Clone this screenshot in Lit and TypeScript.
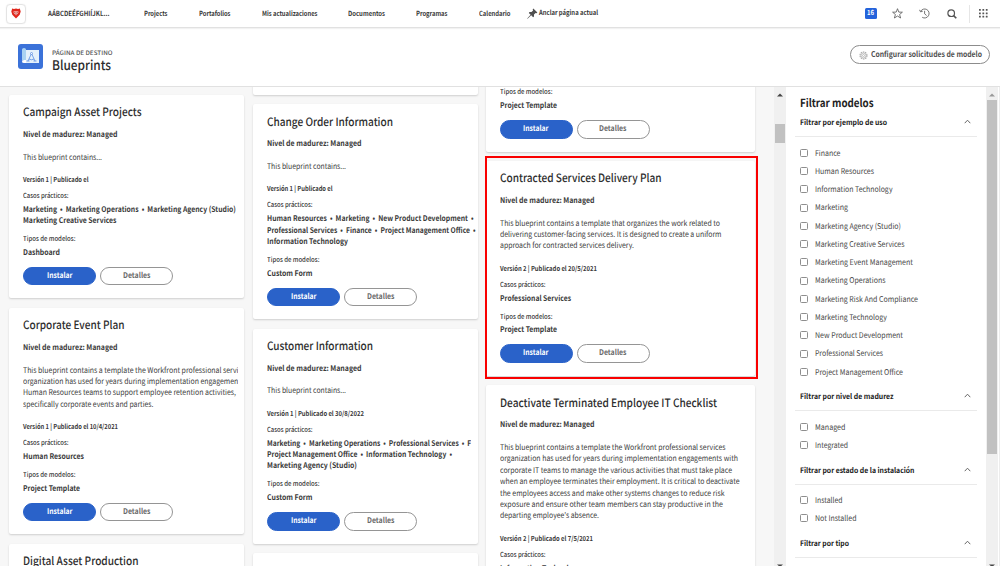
import { LitElement, html, css, svg } from "lit";
import { customElement, property } from "lit/decorators.js";

type Line = [text: string, width: number, clip?: number];

interface Blueprint {
  title?: Line;
  level?: Line;
  desc?: Line[];
  version?: Line;
  cases?: Line[];
  types?: Line;
}

const level: Line = ["Nivel de madurez: Managed", 94.5];
const short: Line[] = [["This blueprint contains...", 79]];
const columns: { name: string; cards: Blueprint[] }[] = [
  {
    name: "first",
    cards: [
      {
        title: ["Campaign Asset Projects", 118.5], level, desc: short,
        version: ["Versión 1 | Publicado el", 65.5],
        cases: [["Marketing  •  Marketing Operations  •  Marketing Agency (Studio)  •", 218.5, 215], ["Marketing Creative Services", 93.5]],
        types: ["Dashboard", 37],
      },
      {
        title: ["Corporate Event Plan", 101.5], level,
        desc: [
          ["This blueprint contains a template the Workfront professional services", 226, 215],
          ["organization has used for years during implementation engagements", 221, 215],
          ["Human Resources teams to support employee retention activities,", 213],
          ["specifically corporate events and parties.", 130.5],
        ],
        version: ["Versión 1 | Publicado el 10/4/2021", 95],
        cases: [["Human Resources", 61]],
        types: ["Project Template", 57],
      },
      { title: ["Digital Asset Production", 115.5], level, desc: short },
    ],
  },
  {
    name: "second",
    cards: [
      {},
      {
        title: ["Change Order Information", 126], level, desc: short,
        version: ["Versión 1 | Publicado el", 65.5],
        cases: [
          ["Human Resources  •  Marketing  •  New Product Development  •", 206.5],
          ["Professional Services  •  Finance  •  Project Management Office  •", 208.5],
          ["Information Technology", 81],
        ],
        types: ["Custom Form", 45.5],
      },
      {
        title: ["Customer Information", 106], level, desc: short,
        version: ["Versión 1 | Publicado el 30/8/2022", 97],
        cases: [
          ["Marketing  •  Marketing Operations  •  Professional Services  •  Finance", 226, 204],
          ["Project Management Office  •  Information Technology  •", 185],
          ["Marketing Agency (Studio)", 90],
        ],
        types: ["Custom Form", 45.5],
      },
      { title: ["Digital Asset Production", 115.5], level, desc: short },
    ],
  },
  {
    name: "third",
    cards: [
      { types: ["Project Template", 57] },
      {
        title: ["Contracted Services Delivery Plan", 161.5], level,
        desc: [
          ["This blueprint contains a template that organizes the work related to", 220],
          ["delivering customer-facing services. It is designed to create a uniform", 221.5],
          ["approach for contracted services delivery.", 134],
        ],
        version: ["Versión 2 | Publicado el 20/5/2021", 97],
        cases: [["Professional Services", 71]],
        types: ["Project Template", 57],
      },
      {
        title: ["Deactivate Terminated Employee IT Checklist", 217], level,
        desc: [
          ["This blueprint contains a template the Workfront professional services", 225.5],
          ["organization has used for years during implementation engagements with", 238],
          ["corporate IT teams to manage the various activities that must take place", 232],
          ["when an employee terminates their employment. It is critical to deactivate", 239.5],
          ["the employees access and make other systems changes to reduce risk", 224.5],
          ["exposure and ensure other team members can stay productive in the", 223],
          ["departing employee's absence.", 99],
        ],
        version: ["Versión 2 | Publicado el 7/5/2021", 93],
        cases: [["Information Technology", 81]],
        types: ["Project Template", 57],
      },
    ],
  },
];

const filters: { title: Line; items: Line[] }[] = [
  {
    title: ["Filtrar por ejemplo de uso", 87],
    items: [
      ["Finance", 25.5], ["Human Resources", 59], ["Information Technology", 77.5], ["Marketing", 33],
      ["Marketing Agency (Studio)", 86], ["Marketing Creative Services", 89.5], ["Marketing Event Management", 98],
      ["Marketing Operations", 70.5], ["Marketing Risk And Compliance", 103], ["Marketing Technology", 72],
      ["New Product Development", 88], ["Professional Services", 68], ["Project Management Office", 88],
    ],
  },
  { title: ["Filtrar por nivel de madurez", 93.5], items: [["Managed", 30.5], ["Integrated", 33]] },
  { title: ["Filtrar por estado de la instalación", 114.5], items: [["Installed", 27.5], ["Not Installed", 41.5]] },
  { title: ["Filtrar por tipo", 49], items: [] },
];

const nav: Line[] = [
  ["Projects", 23.5], ["Portafolios", 31.5], ["Mis actualizaciones", 55.5],
  ["Documentos", 37], ["Programas", 31.5], ["Calendario", 31.5],
];

/** One line of text, condensed or widened so that it fills the given width. */
@customElement("text-run")
export class TextRun extends LitElement {
  @property() text = "";
  @property({ type: Number }) width = 0;
  @property({ type: Number }) clip = 0;

  static styles = css`
    :host { display: block; white-space: pre; flex: none; }
    .box { overflow: visible; }
    .box.cut { overflow: hidden; }
    .run { display: inline-block; vertical-align: top; transform-origin: 0 50%; }
  `;

  render() {
    return html`<div class=${this.clip ? "box cut" : "box"} style="width:${this.clip || this.width}px"><span class="run">${this.text}</span></div>`;
  }

  updated() {
    const run = this.renderRoot.querySelector<HTMLElement>(".run")!;
    run.style.transform = "none";
    const natural = run.getBoundingClientRect().width;
    run.style.transform = `scaleX(${this.width / natural})`;
  }
}

const run = (line: Line, cls = "") =>
  html`<text-run class=${cls} .text=${line[0]} .width=${line[1]} .clip=${line[2] ?? 0}></text-run>`;

@customElement("blueprint-card")
export class BlueprintCard extends LitElement {
  @property({ attribute: false }) data: Blueprint = {};

  static styles = css`
    :host { display: block; flex: none; background: #fff; border-radius: 2px; box-shadow: 0 1px 2px rgba(0,0,0,.17); padding: 9.4px 0 13px 14px; color: #3a3a3a; }
    .title { font-size: 11.4px; line-height: 16px; font-weight: 500; margin-bottom: 8.4px; color: #2e2e2e; }
    .level { font-size: 7.8px; line-height: 12px; font-weight: 700; margin-bottom: 10.8px; }
    .desc { font-size: 7.9px; line-height: 11.4px; color: #404040; }
    .version { font-size: 6.9px; line-height: 12px; font-weight: 600; margin: 10px 0 4px; }
    .label { font-size: 6.9px; line-height: 12px; font-weight: 500; margin-bottom: 2.9px; }
    .value { font-size: 7.8px; line-height: 11.4px; font-weight: 700; }
    .cases { margin-bottom: 5.4px; }
    .buttons { display: flex; gap: 4px; margin-top: 8.5px; }
    .button { box-sizing: border-box; width: 73px; height: 18.6px; border-radius: 10px; display: flex; justify-content: center; font-size: 7.8px; line-height: 16.4px; font-weight: 700; }
    .install { background: #2a62c9; color: #fff; border: 1px solid #2a62c9; }
    .details { border: 1px solid #959595; color: #6a6a6a; }
  `;

  render() {
    const d = this.data;
    return html`
      ${d.title ? run(d.title, "title") : ""}
      ${d.level ? run(d.level, "level") : ""}
      ${d.desc ? d.desc.map((l) => run(l, "desc")) : ""}
      ${d.version ? run(d.version, "version") : ""}
      ${d.cases ? html`${run(["Casos prácticos:", 45.5], "label")}<div class="cases">${d.cases.map((l) => run(l, "value"))}</div>` : ""}
      ${d.types ? html`
        ${run(["Tipos de modelos:", 52.5], "label")}
        ${run(d.types, "value")}
        <div class="buttons">
          <div class="button install">${run(["Instalar", 25.5])}</div>
          <div class="button details">${run(["Detalles", 27.5])}</div>
        </div>` : ""}
    `;
  }
}

const dots = [0, 1, 2].flatMap((r) => [0, 1, 2].map((c) => svg`<rect x=${c * 3.4} y=${r * 3.4} width="1.8" height="1.8" rx=".3" />`));

@customElement("app-root")
export class AppRoot extends LitElement {
  static styles = css`
    :host { display: flex; flex-direction: column; width: 1000px; height: 566px; overflow: hidden; background: #fff; color: #3a3a3a; font-family: "Noto Sans CJK JP", "Open Sans", sans-serif; text-rendering: geometricPrecision; position: relative; }
    svg { display: block; flex: none; }
    .top { box-sizing: border-box; flex: none; height: 28px; border-bottom: 1px solid #e1e1e1; box-shadow: 0 1px 1px rgba(0,0,0,.05); display: flex; align-items: center; padding-left: 6px; font-size: 7px; line-height: 12px; font-weight: 600; }
    .logo { box-sizing: border-box; width: 20px; height: 20px; border: 1px solid #e4e4e4; border-radius: 4px; display: grid; place-items: center; margin-right: 21.5px; box-shadow: 0 0 1px rgba(0,0,0,.12); }
    .nav { display: flex; gap: 31.2px; margin-left: 35.2px; }
    .pin { margin: 0 1px 0 16px; }
    .pinned { margin-top: -1px; }
    .tools { margin-left: auto; display: flex; align-items: center; height: 27px; padding-right: 12px; }
    .badge { width: 11.5px; height: 11.5px; border-radius: 1.5px; background: #2463db; color: #fff; font-size: 7px; line-height: 10px; font-weight: 700; display: flex; justify-content: center; margin-right: 15px; }
    .star { margin-right: 16px; }
    .clock { margin-right: 17px; }
    .sep { width: 1px; height: 18px; background: #e6e6e6; margin: 0 9.5px 0 12px; }
    .head { box-sizing: border-box; flex: none; height: 58.5px; display: flex; align-items: center; padding: 0 10.5px 0 18px; border-bottom: 1px solid #e1e1e1; }
    .names { margin-left: 9px; padding-top: 6.5px; }
    .over { font-size: 6px; line-height: 9px; font-weight: 500; color: #555; }
    .name { font-size: 13.2px; line-height: 16px; font-weight: 500; color: #2c2c2c; }
    .config { box-sizing: border-box; margin-left: auto; margin-bottom: 4px; width: 140px; height: 19px; border: 1.4px solid #8c8c8c; border-radius: 10px; display: flex; align-items: center; padding: 1px 0 0 8px; gap: 3px; font-size: 8px; line-height: 12px; font-weight: 700; color: #505050; }
    .body { flex: 1; min-height: 0; display: flex; }
    .board { width: 774px; flex: none; display: flex; gap: 9px; padding-left: 9px; box-sizing: border-box; background: #f7f7f7; overflow: hidden; }
    .col { display: flex; flex-direction: column; gap: 9.5px; flex: none; }
    .first { width: 235px; margin-top: 8.5px; }
    .second { width: 224.5px; margin-top: -14px; }
    .third { width: 269px; margin: -10.7px 0 0 -1px; }
    .bar { width: 12px; flex: none; background: #f0f0f0; display: flex; flex-direction: column; align-items: center; }
    .bar svg { margin-top: 6px; }
    .thumb { width: 10.5px; background: #c1c1c1; }
    .bar.main .thumb { height: 19px; margin-top: 27.5px; }
    .bar.side .thumb { height: 354px; margin-top: 3px; }
    .edge { flex: 1; border-right: 1px solid #ececec; }
    .grow { flex: 1; }
    .filters { width: 200px; flex: none; overflow: hidden; padding: 8.8px 9px 0 9px; box-sizing: border-box; }
    .ftitle { font-size: 11.2px; line-height: 16px; font-weight: 600; color: #222; margin: 0 0 5px 5px; }
    .group { margin-bottom: 9.4px; }
    .ghead { box-sizing: border-box; height: 21px; border-bottom: 1.5px solid #eaeaea; display: flex; justify-content: space-between; padding: 0 6px 0 5px; margin-bottom: 6.4px; font-size: 7.6px; line-height: 13.2px; font-weight: 700; color: #222; }
    .ghead svg { margin-top: 3px; }
    .item { height: 18.25px; display: flex; align-items: center; padding-left: 5px; gap: 7px; font-size: 7.9px; line-height: 12px; color: #484848; }
    .item text-run { padding-top: 1.8px; }
    .check { box-sizing: border-box; width: 8px; height: 8px; border: 1px solid #8e8e8e; border-radius: 1.5px; }
    .mark { position: absolute; left: 485px; top: 156px; width: 273px; height: 223px; box-sizing: border-box; border: 2px solid #f90000; }
  `;

  render() {
    return html`
      <div class="top">
        <div class="logo">
          <svg width="10" height="11" viewBox="0 0 10 11">
            <path d="M1.200.600 3 1 5 .4 7 1l1.800-.4.9 3-1 3.200L5 10.600 1.300 6.800.3 3.600z" fill="#e0271c" />
            <path d="M2.800 3 4 3.600l1-.6 1 .6L7.200 3l.3 1.800L5 7.600 2.500 4.800z" fill="#f3b9b5" />
            <path d="M3.300 4.200h1v.8h-1zM5.700 4.200h1v.8h-1zM4.100 5.700h1.800L5 6.700z" fill="#b3150e" />
          </svg>
        </div>
        ${run(["AÁBCDEÉFGHIÍJKL...", 61.500])}
        <div class="nav">${nav.map((l) => run(l))}</div>
        <svg class="pin" width="11" height="11" viewBox="0 0 11 11">
          <path d="M6.300.6 10.400 4.600 9.500 5.300 8.600 5 7 6.600 7 8.600 6.100 9.300 4.200 7.300.6 10.700.2 10.400 3.600 6.700 1.800 4.900 2.500 4 4.500 4 6.100 2.400 5.700 1.400z" fill="#505050" />
        </svg>
        ${run(["Anclar página actual", 59], "pinned")}
        <div class="tools">
          <div class="badge">${run(["16", 7])}</div>
          <svg class="star" width="11" height="11" viewBox="0 0 11 11"><path d="M5.500.7 6.800 4.100l3.600.1-2.800 2.300 1 3.500-3.100-2-3.100 2 1-3.500L.6 4.200l3.600-.1z" fill="none" stroke="#555" stroke-width=".8" /></svg>
          <svg class="clock" width="11" height="11" viewBox="0 0 11 11" fill="none" stroke="#666" stroke-width=".9"><path d="M1.600 3.400A4.500 4.500 0 1 1 3.200 9.300M.5 1.800l1 2 2.200-.5M5.600 2.800v3l2 1.700" /></svg>
          <svg width="10" height="10" viewBox="0 0 10 10" fill="none" stroke="#555"><circle cx="4.200" cy="4.200" r="3.300" stroke-width="1.200" /><path d="M6.600 6.600 9.300 9.300" stroke-width="1.600" /></svg>
          <div class="sep"></div>
          <svg width="9" height="9" viewBox="0 0 9 9" fill="#555">${dots}</svg>
        </div>
      </div>
      <div class="head">
        <svg width="25" height="25" viewBox="0 0 25 25">
          <rect width="25" height="25" rx="3" fill="#3b72d9" />
          <path d="M6 6h15v13H6z" fill="#e4f1fb" />
          <path d="M4 5.500Q4 4 6 4t2 1.500V16H6q-2 0-2 1.500z" fill="#a9d2f2" />
          <path d="M4 17.500Q4 16 6 16h2v3H6q-2 0-2-1.500z" fill="#fff" />
          <g fill="none" stroke="#5a8ee2" stroke-width=".8"><path d="M13.500 9.500 10 17M13.500 9.500 17 17M11 15q2.500 1.500 5 0M8.500 17h3M15.500 17h3" /><circle cx="13.500" cy="9.500" r="1" fill="#fff" /></g>
        </svg>
        <div class="names">
          ${run(["PÁGINA DE DESTINO", 60.500], "over")}
          ${run(["Blueprints", 59], "name")}
        </div>
        <div class="config">
          <svg width="9" height="9" viewBox="0 0 9 9" fill="none" stroke="#a8a8a8"><circle cx="4.500" cy="4.500" r="3.500" stroke-width="1.100" stroke-dasharray="1.500 .7" /><circle cx="4.500" cy="4.500" r="2.500" stroke-width=".7" /><circle cx="4.500" cy="4.500" r="1" stroke-width=".7" /></svg>
          ${run(["Configurar solicitudes de modelo", 111])}
        </div>
      </div>
      <div class="body">
        <div class="board">
          ${columns.map((c) => html`<div class="col ${c.name}">${c.cards.map((d) => html`<blueprint-card .data=${d}></blueprint-card>`)}</div>`)}
        </div>
        <div class="bar main">
          <svg width="6" height="4" viewBox="0 0 6 4"><path d="M0 3.500 3 .5l3 3z" fill="#444" /></svg>
          <div class="thumb"></div>
          <div class="grow"></div>
          <svg width="6" height="2" viewBox="0 0 6 2"><path d="M0 .5h6L3 3z" fill="#444" /></svg>
        </div>
        <div class="filters">
          ${run(["Filtrar modelos", 73.500], "ftitle")}
          ${filters.map((g) => html`
            <div class="group">
              <div class="ghead">
                ${run(g.title)}
                <svg width="7" height="5" viewBox="0 0 7 5"><path d="M.7 4.200 3.500 1.200l2.800 3" fill="none" stroke="#666" /></svg>
              </div>
              ${g.items.map((l) => html`<div class="item"><div class="check"></div>${run(l)}</div>`)}
            </div>`)}
        </div>
        <div class="bar side">
          <svg width="6" height="4" viewBox="0 0 6 4"><path d="M0 3.500 3 .5l3 3z" fill="#999" /></svg>
          <div class="thumb"></div>
          <div class="grow"></div>
          <svg width="6" height="2" viewBox="0 0 6 2"><path d="M0 .5h6L3 3z" fill="#444" /></svg>
        </div>
        <div class="edge"></div>
      </div>
      <div class="mark"></div>
    `;
  }
}
